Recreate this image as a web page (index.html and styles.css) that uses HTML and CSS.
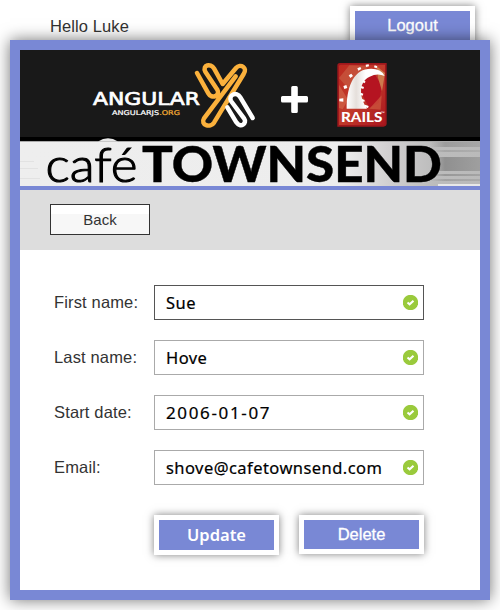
FILE: index.html
```
<!DOCTYPE html>
<html lang="en">
<head>
<meta charset="utf-8">
<title>Café Townsend</title>
<link rel="stylesheet" href="styles.css">
</head>
<body>
<header class="topbar">
  <span class="greeting">Hello Luke</span>
  <button class="button logout">Logout</button>
</header>
<main class="panel">
  <svg class="masthead" viewBox="20 50 460 136" width="460" height="136">
    <defs>
      <linearGradient id="strip"><stop offset="0" stop-color="#eee"/><stop offset=".7" stop-color="#ededed"/><stop offset=".8" stop-color="#d2d0d1"/><stop offset=".9" stop-color="#bcbcbc"/><stop offset="1" stop-color="#bababa"/></linearGradient>
      <linearGradient id="streak"><stop offset="0" stop-color="#888" stop-opacity="0"/><stop offset=".3" stop-color="#888"/><stop offset="1" stop-color="#9a9a9a"/></linearGradient>
      <linearGradient id="ruby" x2="1" y2="1"><stop offset="0" stop-color="#bd2a20"/><stop offset=".5" stop-color="#c13a2b"/><stop offset="1" stop-color="#aa151d"/></linearGradient>
      <linearGradient id="track"><stop offset="0" stop-color="#fff"/><stop offset=".25" stop-color="#e5dfdb"/><stop offset=".5" stop-color="#fff"/></linearGradient>
    </defs>
    <rect x="20" y="50" width="460" height="87" fill="#191919"/>
    <rect x="20" y="137" width="460" height="4" fill="#000"/>
    <rect x="20" y="141" width="460" height="45" fill="url(#strip)"/>
    <rect x="20" y="141" width="460" height="1" fill="#aaa"/>
    <path d="M20 161H34v1H20zM20 168H38v1H20zM20 178H40v1H20z" fill="#e2e2e2"/>
    <g fill="url(#streak)">
      <rect x="430" y="142" width="50" height="5" opacity=".6"/>
      <rect x="430" y="150" width="50" height="2" opacity=".4"/>
      <rect x="430" y="157" width="50" height="14" opacity=".85"/>
      <rect x="430" y="174" width="50" height="2" opacity=".7"/>
      <rect x="430" y="179" width="50" height="2" opacity=".5"/>
    </g>
    <rect x="438" y="184" width="42" height="2" fill="#e8e8e8"/>
    <path d="M98 141.500Q108 135 118 141.500Z" fill="#e7e7e7"/>
    <text class="word-cafe" x="45.500" y="181.500" textLength="92" lengthAdjust="spacingAndGlyphs">café</text>
    <text class="word-townsend" x="142" y="181.800" textLength="300" lengthAdjust="spacingAndGlyphs">TOWNSEND</text>

    <text class="word-angular" x="93" y="104.500" textLength="107" lengthAdjust="spacingAndGlyphs">ANGULAR</text>
    <text class="word-site" x="112" y="115" textLength="68" lengthAdjust="spacingAndGlyphs">ANGULARJS<tspan class="word-org">.ORG</tspan></text>
    <g transform="translate(80 55) scale(.33333)" fill="none" stroke-width="13.500" stroke-linecap="round" stroke-linejoin="round">
      <path stroke="#fbb13c" d="M351 54L385 115C395 134 422 122 412 104L376 50C366 30 392 24 402 40L428 87L468 39C481 24 504 38 491 57L402 203C391 220 360 210 372 190L467 64"/>
      <path stroke="#fff" d="M442 157L469 202C481 220 503 206 492 190L453 138C444 120 470 108 481 127L518 189"/>
    </g>

    <path d="M291.200 87.500Q291.200 86 292.700 86H296.300Q297.800 86 297.800 87.500V96H306.500Q308 96 308 97.500V101Q308 102.500 306.500 102.500H297.800V111.500Q297.800 113 296.300 113H292.700Q291.200 113 291.200 111.500V102.500H282.500Q281 102.500 281 101V97.500Q281 96 282.500 96H291.200Z" fill="#fff"/>

    <g transform="translate(332 58) scale(.33333)">
      <path d="M24 15H164V196Q164 206 154 206H16V23Q16 15 24 15Z" fill="#9f171c"/>
      <path d="M26 20H159V192Q159 201 150 201H21V25Q21 20 26 20Z" fill="url(#ruby)"/>
      <path d="M21 60L52 22L110 24L55 100Z" fill="#c85b42" opacity=".7"/>
      <path d="M21 80L48 125L32 154L21 150Z" fill="#d87855" opacity=".5"/>
      <path d="M90 62L128 48L150 85L140 135L112 150L88 105Z" fill="#b51421"/>
      <path d="M134 25L159 45L150 100L138 59Z" fill="#d39158" opacity=".75"/>
      <path d="M112 152L149 112L146 155Z" fill="#cf5e42" opacity=".65"/>
      <path d="M44 152C44 92 62 38 108 33Q145 29 158 54Q136 44 113 56C80 72 80 113 105 152Z" fill="url(#track)"/>
      <path d="M70 31l9-4 3 6-9 5zM95 20l9-1 1 6-9 2zM122 22l8 3-2 6-8-3zM44 52l8-5 5 7-8 6zM28 84l9-3 3 9-9 3zM16 122l12-1v10l-12-1z" transform="translate(6 0)" fill="#fff"/>
      <path d="M94 66l7 5-4 5-6-5zM88 84l8 3-2 6-8-3zM86 104l8 3-2 6-8-3zM90 123l8 3-1 6-8-3zM99 140l11 4-2 6-10-2z" fill="#fff"/>
      <text class="word-rails" x="27" y="192" textLength="124" lengthAdjust="spacingAndGlyphs">RAILS</text>
      <text class="word-tm" x="147" y="168">™</text>
    </g>
  </svg>
  <nav class="toolbar"><button class="back">Back</button></nav>
  <form class="form">
    <div class="field">
      <label class="label" for="first">First name:</label>
      <div class="control control-focus"><input class="input" id="first" value="Sue"><svg class="valid" viewBox="0 0 15 15"><circle cx="7.500" cy="7.500" r="7.700"/><path d="M4.500 7.500L6.600 9.300L10.500 5.700"/></svg></div>
    </div>
    <div class="field">
      <label class="label" for="last">Last name:</label>
      <div class="control"><input class="input" id="last" value="Hove"><svg class="valid" viewBox="0 0 15 15"><circle cx="7.500" cy="7.500" r="7.700"/><path d="M4.500 7.500L6.600 9.300L10.500 5.700"/></svg></div>
    </div>
    <div class="field">
      <label class="label" for="start">Start date:</label>
      <div class="control"><input class="input input-date" id="start" value="2006-01-07"><svg class="valid" viewBox="0 0 15 15"><circle cx="7.500" cy="7.500" r="7.700"/><path d="M4.500 7.500L6.600 9.300L10.500 5.700"/></svg></div>
    </div>
    <div class="field">
      <label class="label" for="email">Email:</label>
      <div class="control"><input class="input" id="email" value="shove@cafetownsend.com"><svg class="valid" viewBox="0 0 15 15"><circle cx="7.500" cy="7.500" r="7.700"/><path d="M4.500 7.500L6.600 9.300L10.500 5.700"/></svg></div>
    </div>
    <div class="actions">
      <button class="button update" type="button">Update</button>
      <button class="button delete" type="button">Delete</button>
    </div>
  </form>
</main>
</body>
</html>
```
FILE: styles.css
```
* { box-sizing: border-box; }
body {
  margin: 0;
  height: 610px;
  overflow: hidden;
  background: #fff;
  color: #333;
  font: 16.500px/18px "Liberation Sans", Arial, sans-serif;
}
.topbar {
  display: flex;
  justify-content: space-between;
  height: 40px;
  padding: 6px 25px 0 50px;
}
.greeting { padding-top: 11px; letter-spacing: .1px; }
.button {
  width: 125px;
  height: 39px;
  padding: 0 0 2px;
  border: 5px solid #fff;
  background: #7988d5;
  color: #fff;
  font: 16.500px/18px "Liberation Sans", Arial, sans-serif;
  -webkit-text-stroke: .3px #fff;
  box-shadow: 0 0 8px rgba(0, 0, 0, .5);
}
.panel {
  position: relative;
  width: 480px;
  height: 560px;
  margin-left: 10px;
  border: 10px solid #7988d5;
  background: #fff;
  box-shadow: 0 0 15px rgba(0, 0, 0, .55);
}
.masthead { display: block; overflow: visible; }
.word-cafe { font: 300 48px Lato, sans-serif; fill: #000; stroke: #000; stroke-width: 1.100px; }
.word-townsend { font: 900 49px Lato, sans-serif; fill: #000; stroke: #000; stroke-width: .4px; }
.word-angular { font: 400 17.500px "DejaVu Sans", sans-serif; fill: #fff; stroke: #fff; stroke-width: .7px; }
.word-site { font: 400 6.500px "DejaVu Sans", sans-serif; fill: #fff; stroke: #fff; stroke-width: .2px; }
.word-org { fill: #f5ad35; stroke: #f5ad35; }
.word-rails { font: 900 38px Lato, sans-serif; fill: #fff; }
.word-tm { font: 12px "Liberation Sans", sans-serif; fill: #fff; }
.toolbar {
  height: 64px;
  padding: 14px 30px 0;
  border-top: 4px solid #7988d5;
  background: #ddd;
}
.back {
  display: block;
  width: 100px;
  height: 31px;
  padding: 0;
  border: 1px solid #333;
  background: linear-gradient(#fff 9px, #f7f7f7 9px);
  color: #333;
  font: 15px/17px "Liberation Sans", Arial, sans-serif;
}
.form { padding: 35px 46px 0 34px; }
.field { display: flex; height: 35px; margin-bottom: 20px; }
.label { width: 100px; padding-top: 8px; letter-spacing: .15px; white-space: nowrap; }
.control {
  display: flex;
  align-items: center;
  width: 270px;
  padding: 0 5px 0 11px;
  border: 1px solid #aaa;
}
.control-focus { border-color: #555; }
.input {
  flex: 1;
  min-width: 0;
  height: 31px;
  padding: 0;
  border: 0;
  outline: 0;
  background: transparent;
  color: #000;
  font: 400 16.500px "Noto Sans", sans-serif;
  letter-spacing: .45px;
  -webkit-text-stroke: .2px #000;
}
.input-date { font-size: 17px; letter-spacing: 1.650px; }
.valid { width: 15px; height: 15px; fill: #9aca3c; }
.valid path { fill: none; stroke: #fff; stroke-width: 2; }
.actions { display: flex; gap: 20px; margin: 30px 0 0 100px; }
.update {
  height: 40px;
  padding: 0;
  font: 600 16.500px/20px "Noto Sans", sans-serif;
  -webkit-text-stroke: 0;
}
```
